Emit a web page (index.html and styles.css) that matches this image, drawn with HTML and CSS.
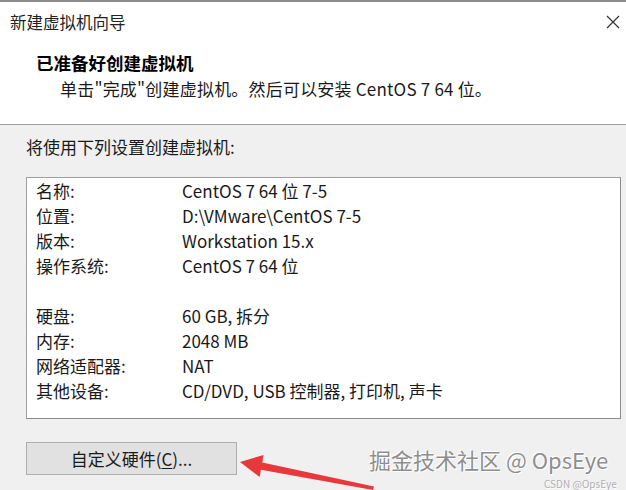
FILE: index.html
```html
<!DOCTYPE html>
<html lang="zh-CN">
<head>
    <meta charset="UTF-8">
    <title>新建虚拟机向导</title>
    <link rel="stylesheet" href="styles.css">
</head>
<body>
    <div class="window">
        <div class="header">
            <div class="titlebar">
                <span class="title">新建虚拟机向导</span>
                <span class="close">
                    <svg width="14" height="14" viewBox="0 0 14 14"><path d="M1 1L13 13M13 1L1 13" stroke="#333" stroke-width="1.2" fill="none"/></svg>
                </span>
            </div>
            <div class="intro">
                <h1>已准备好创建虚拟机</h1>
                <p>单击"完成"创建虚拟机。然后可以安装 CentOS 7 64 位。</p>
            </div>
        </div>

        <div class="content">
            <p class="lead">将使用下列设置创建虚拟机:</p>

            <div class="summary">
                <div class="row"><span class="label">名称:</span><span>CentOS 7 64 位 7-5</span></div>
                <div class="row"><span class="label">位置:</span><span>D:\VMware\CentOS 7-5</span></div>
                <div class="row"><span class="label">版本:</span><span>Workstation 15.x</span></div>
                <div class="row"><span class="label">操作系统:</span><span>CentOS 7 64 位</span></div>
                <div class="row"></div>
                <div class="row"><span class="label">硬盘:</span><span>60 GB, 拆分</span></div>
                <div class="row"><span class="label">内存:</span><span>2048 MB</span></div>
                <div class="row"><span class="label">网络适配器:</span><span>NAT</span></div>
                <div class="row"><span class="label">其他设备:</span><span>CD/DVD, USB 控制器, 打印机, 声卡</span></div>
            </div>

            <button class="hw-button">自定义硬件(<u>C</u>)...</button>
        </div>

        <svg class="arrow" width="626" height="490" viewBox="0 0 626 490">
            <polygon points="240,462 263.5,455 262.3,462.5 374,486.5 373,490 260.9,469.8 259.7,477" fill="#e8383b"/>
        </svg>
        <div class="watermark">掘金技术社区 @ OpsEye</div>
        <div class="watermark-small">CSDN @OpsEye</div>
    </div>
</body>
</html>
```

FILE: styles.css
```css
body, html {
    margin: 0;
    padding: 0;
    font-family: "Noto Sans CJK SC", sans-serif;
    color: #1a1a1a;
    background-color: #f0f0f0;
}

.window {
    position: relative;
    width: 626px;
    height: 490px;
    overflow: hidden;
    border-top: 2px solid #8c8c8c;
    box-sizing: border-box;
}

.header {
    background-color: #fff;
    height: 122px;
    border-bottom: 1px solid #a0a0a0;
}

.titlebar {
    display: flex;
    justify-content: space-between;
    align-items: center;
    height: 40px;
    padding: 0 6px 0 10px;
}

.title {
    font-size: 16.5px;
    color: #222;
}

.close {
    display: flex;
    width: 14px;
    height: 14px;
}

.intro {
    padding-left: 36px;
}

.intro h1 {
    margin: 9px 0 0;
    font-size: 17.5px;
    line-height: 24px;
    font-weight: bold;
    color: #000;
}

.intro p {
    margin: 2px 0 0 24px;
    font-size: 17px;
    line-height: 24px;
    letter-spacing: 0.2px;
}

.content {
    padding: 0 5px 0 26px;
}

.lead {
    margin: 10px 0 0;
    font-size: 17px;
    line-height: 24px;
}

.summary {
    margin-top: 18px;
    height: 242px;
    box-sizing: border-box;
    background-color: #fff;
    border: 1px solid #a0a0a0;
    border-right-color: #8a8a8a;
    border-bottom-color: #8a8a8a;
    padding-left: 9px;
    font-size: 17px;
}

.row {
    display: flex;
    height: 25px;
    line-height: 25px;
}

.label {
    width: 146px;
}

.hw-button {
    margin-top: 23px;
    width: 211px;
    height: 33px;
    background-color: #e1e1e1;
    border: 1px solid #adadad;
    font-family: inherit;
    font-size: 17px;
    color: #1a1a1a;
    padding: 0;
}

.hw-button u {
    text-underline-offset: 2px;
}

.arrow {
    position: absolute;
    left: 0;
    top: -2px;
    pointer-events: none;
}

.watermark {
    position: absolute;
    left: 369px;
    top: 444px;
    font-size: 22px;
    line-height: 26px;
    color: #8e8e8e;
    text-shadow: 1px 1px 0 #fff, -1px -1px 0 #fff;
}

.watermark-small {
    position: absolute;
    left: 544px;
    top: 476px;
    font-size: 10px;
    line-height: 12px;
    color: #b0b0b0;
    text-shadow: 1px 1px 0 #fff;
}
```
